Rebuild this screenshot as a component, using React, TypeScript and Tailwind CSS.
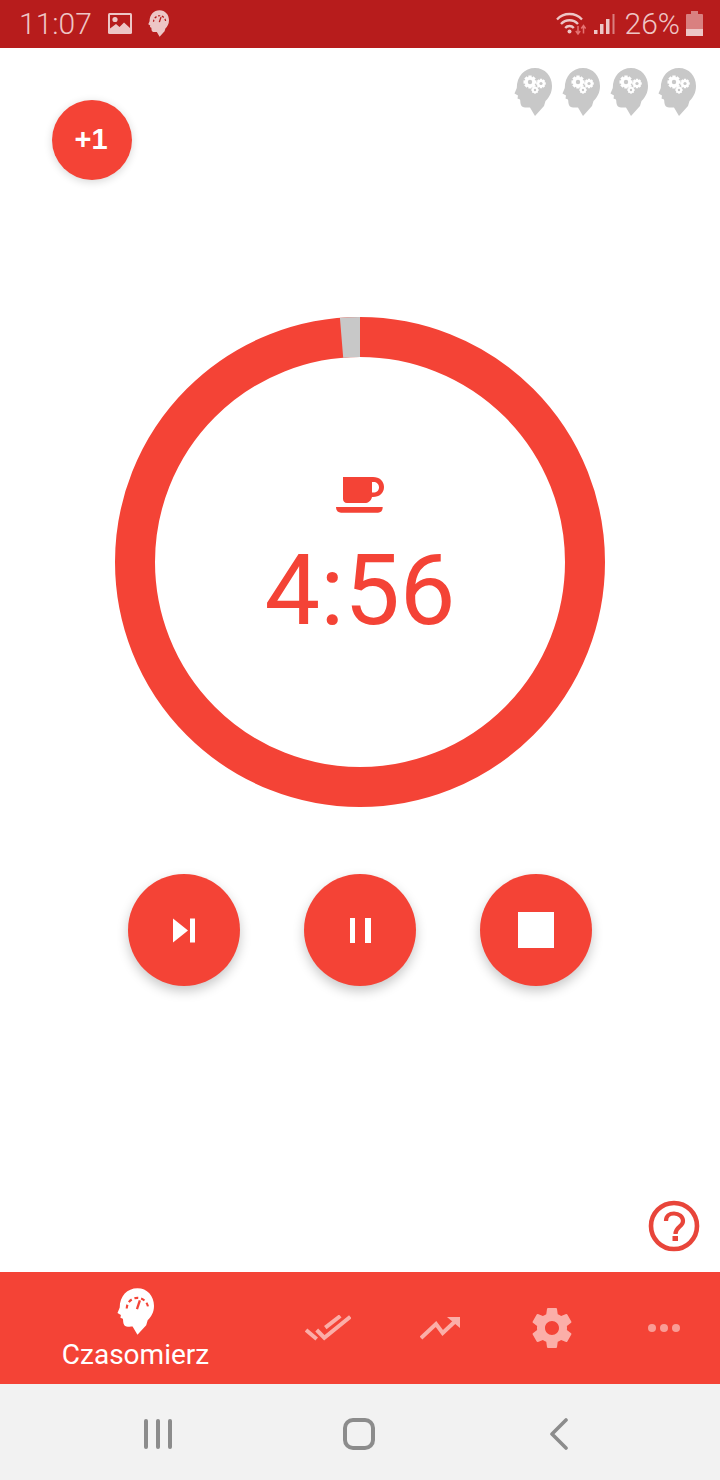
const RED = "#f44336";

const HEAD = "M21 0C31 0 38 8 38 18C38 25 35 29.5 31.5 33L30 38L21 48L16 39.5C13 39.5 9 40 7.5 38C6 36 6.5 33 6 31.5L3.5 30.5L4 27.5L0.5 25.5L2.8 20C2.8 8 10.5 0 21 0Z";

function Gear({ cx, cy, r }: { cx: number; cy: number; r: number }) {
  const teeth = [0, 45, 90, 135];
  return (
    <g>
      {teeth.map((a) => (
        <rect key={a} x={cx - r * 1.25} y={cy - r * 0.32} width={r * 2.5} height={r * 0.64} fill="#fff" transform={`rotate(${a} ${cx} ${cy})`} />
      ))}
      <circle cx={cx} cy={cy} r={r} fill="#fff" />
      <circle cx={cx} cy={cy} r={r * 0.42} fill="#c8c8c8" />
    </g>
  );
}

function GearHead() {
  return (
    <svg width="38" height="48" viewBox="0 0 38 48" className="block">
      <path d={HEAD} fill="#c8c8c8" />
      <Gear cx={16} cy={14} r={5.2} />
      <Gear cx={27} cy={15.5} r={3.8} />
      <Gear cx={21} cy={22} r={2.9} />
    </svg>
  );
}

function GaugeHead({ w, h, fg, bg }: { w: number; h: number; fg: string; bg: string }) {
  return (
    <svg width={w} height={h} viewBox="0 0 38 48" className="block">
      <path d={HEAD} fill={fg} />
      <path d="M10 21A11 11 0 0 1 32 21" fill="none" stroke={bg} strokeWidth="2.2" strokeDasharray="4 3" />
      <path d="M20.5 21.5L23.5 12.5" stroke={bg} strokeWidth="2.4" />
    </svg>
  );
}

function StatusBar() {
  const c = "#edc6c6";
  const dim = "#d98080";
  return (
    <div className="h-12 bg-[#b71c1c] flex items-center pl-[19px] pr-[17px] font-['Roboto',sans-serif] text-[#eec5c5]">
      <span className="text-[30px] leading-none font-light w-[74px]">11:07</span>
      <svg width="24" height="21" viewBox="0 0 24 21" className="ml-[15px] mt-[-1px]">
        <rect x="0" y="0" width="24" height="21" rx="1.5" fill={c} />
        <rect x="2" y="2" width="20" height="15" fill="#b71c1c" />
        <circle cx="7" cy="6.5" r="2.6" fill={c} />
        <path d="M2 15.5L8 11L11.5 14L16 9.5L22 15V18H2Z" fill={c} />
      </svg>
      <div className="ml-[16px] mt-[-1px]"><GaugeHead w={21} h={27} fg={c} bg="#b71c1c" /></div>
      <div className="flex-1" />
      <svg width="30" height="24" viewBox="0 0 30 24">
        <g fill="none" stroke={c} strokeWidth="2.3">
          <path d="M1 7.5A17 17 0 0 1 26 7.5" />
          <path d="M5 12A11.5 11.5 0 0 1 22 12" />
          <path d="M9.2 16A5.6 5.6 0 0 1 17.8 16" />
        </g>
        <circle cx="13.5" cy="19.5" r="2" fill={c} />
        <path d="M22 14V21.5M19.8 19L22 22L24.2 19" stroke="#e57373" strokeWidth="1.5" fill="none" />
        <path d="M27.5 21.5V14M25.3 16.5L27.5 13.5L29.7 16.5" stroke="#e57373" strokeWidth="1.5" fill="none" />
      </svg>
      <svg width="21" height="20" viewBox="0 0 21 20" className="ml-[8px]">
        <rect x="0" y="16" width="3.5" height="4" fill={c} />
        <rect x="6" y="10" width="3.5" height="10" fill={c} />
        <rect x="12" y="5" width="3.5" height="15" fill={c} />
        <rect x="18.5" y="0" width="2" height="20" fill={dim} />
      </svg>
      <span className="text-[30px] leading-none font-light ml-[10px]">26%</span>
      <div className="flex-1 max-w-[6px]" />
      <svg width="17" height="25" viewBox="0 0 17 25" className="mt-[-1px]">
        <rect x="5" y="0" width="7" height="3" fill={dim} />
        <rect x="0" y="3" width="17" height="22" rx="1" fill={dim} />
        <rect x="0" y="18" width="17" height="7" fill={c} />
      </svg>
    </div>
  );
}

function Ring() {
  const cx = 245;
  const r = 225;
  const a = (-4.7 * Math.PI) / 180;
  const x = cx + r * Math.sin(a);
  const y = cx - r * Math.cos(a);
  return (
    <svg width="490" height="490" viewBox="0 0 490 490" className="block">
      <circle cx={cx} cy={cx} r={r} fill="none" stroke={RED} strokeWidth="40" />
      <path d={`M${x} ${y}A${r} ${r} 0 0 1 ${cx} ${cx - r}`} fill="none" stroke="#c8c8c8" strokeWidth="40" />
    </svg>
  );
}

function RoundButton({ children }: { children: React.ReactNode }) {
  return (
    <button className="w-28 h-28 rounded-full bg-[#f44336] flex items-center justify-center shadow-[0_5px_12px_rgba(0,0,0,0.22)]">
      {children}
    </button>
  );
}

function Main() {
  return (
    <div className="h-[1224px] bg-white relative flex flex-col items-center font-['Roboto',sans-serif]">
      <div className="absolute right-[24px] top-[20px] flex gap-[10px]">
        <GearHead /><GearHead /><GearHead /><GearHead />
      </div>
      <button className="absolute left-[52px] top-[52px] w-20 h-20 rounded-full bg-[#f44336] text-white text-[29px] font-bold font-['Liberation_Sans',sans-serif] flex items-center justify-center shadow-[0_2px_8px_rgba(0,0,0,0.16)] pr-[2px]">
        +1
      </button>

      <div className="mt-[269px] relative w-[490px] h-[490px]">
        <Ring />
        <div className="absolute inset-0 flex flex-col items-center">
          <svg width="48" height="37" viewBox="0 0 48 37" className="mt-[159px]">
            <path d="M7 1H37C43.5 1 48 5 48 11C48 17 43.5 21 37 21H36C35 25 32 27 29 27H11C8.5 27 7 25 7 23ZM36 6V16.5H37.5C40.5 16.5 43 14.5 43 11.2C43 8 40.5 6 37.5 6Z" fill={RED} fillRule="evenodd" />
            <path d="M0 31H46.7C46.7 34.5 45 36.7 42 36.7H5C2 36.7 0 34.5 0 31Z" fill={RED} />
          </svg>
          <div className="text-[99px] leading-none text-[#f44336] mt-[28px]">4:56</div>
        </div>
      </div>

      <div className="mt-[67px] flex gap-16">
        <RoundButton>
          <svg width="22" height="25" viewBox="0 0 22 25">
            <path d="M0 0.5L15 12.5L0 24.5Z" fill="#fff" />
            <rect x="17" y="0.5" width="5" height="24" fill="#fff" />
          </svg>
        </RoundButton>
        <RoundButton>
          <div className="flex gap-[10px] h-[25px]">
            <div className="w-[5.5px] bg-white" />
            <div className="w-[5.5px] bg-white" />
          </div>
        </RoundButton>
        <RoundButton>
          <div className="w-[36px] h-[36px] bg-white" />
        </RoundButton>
      </div>

      <svg width="52" height="52" viewBox="0 0 52 52" className="absolute right-[20px] top-[1152px]">
        <circle cx="26" cy="26" r="23" fill="none" stroke="#e8453a" strokeWidth="4.6" />
        <path d="M18 21C18 16 21.5 13.5 26 13.5C31 13.5 35 16.5 35 21C35 27 27.5 26.5 27.5 34" fill="none" stroke="#e8453a" strokeWidth="4.2" />
        <rect x="24.5" y="36" width="5.5" height="5" fill="#e8453a" />
      </svg>
    </div>
  );
}

function BottomNav() {
  const d = "#fbaea8";
  return (
    <div className="h-28 bg-[#f44336] flex font-['Roboto',sans-serif]">
      <div className="w-[271px] flex flex-col items-center pt-[16px]">
        <GaugeHead w={37} h={47} fg="#fff" bg={RED} />
        <span className="text-white text-[28px] leading-none mt-[6px]">Czasomierz</span>
      </div>
      <div className="w-28 flex items-center justify-center">
        <svg width="46" height="26" viewBox="0 0 46 26" className="ml-[2px]">
          <path d="M1 15L11.7 24" stroke={d} strokeWidth="4" fill="none" />
          <path d="M11.7 15L19.3 22.7L45.3 1.7" stroke={d} strokeWidth="4" fill="none" />
          <path d="M20.3 12.7L35.3 1" stroke={d} strokeWidth="4" fill="none" />
        </svg>
      </div>
      <div className="w-28 flex items-center justify-center">
        <svg width="42" height="26" viewBox="0 0 42 26" className="ml-[4px]">
          <path d="M1 23L16 9L22.7 18L36 5.5" stroke={d} strokeWidth="4" fill="none" />
          <path d="M27 2H40V13Z" fill={d} />
        </svg>
      </div>
      <div className="w-28 flex items-center justify-center">
        <svg width="48" height="48" viewBox="0 0 24 24" className="ml-[2px]">
          <path fill={d} d="M19.43 12.98c.04-.32.07-.64.07-.98s-.03-.66-.07-.98l2.11-1.65c.19-.15.24-.42.12-.64l-2-3.46c-.12-.22-.39-.3-.61-.22l-2.49 1c-.52-.4-1.08-.73-1.69-.98l-.38-2.65C14.46 2.18 14.25 2 14 2h-4c-.25 0-.46.18-.49.42l-.38 2.65c-.61.25-1.17.59-1.69.98l-2.49-1c-.23-.09-.49 0-.61.22l-2 3.46c-.13.22-.07.49.12.64l2.11 1.65c-.04.32-.07.65-.07.98s.03.66.07.98l-2.11 1.65c-.19.15-.24.42-.12.64l2 3.46c.12.22.39.3.61.22l2.49-1c.52.4 1.08.73 1.69.98l.38 2.65c.03.24.24.42.49.42h4c.25 0 .46-.18.49-.42l.38-2.65c.61-.25 1.17-.59 1.69-.98l2.49 1c.23.09.49 0 .61-.22l2-3.46c.12-.22.07-.49-.12-.64l-2.11-1.65zM12 15.5c-1.93 0-3.5-1.57-3.5-3.5s1.57-3.5 3.5-3.5 3.5 1.57 3.5 3.5-1.57 3.5-3.5 3.5z" />
        </svg>
      </div>
      <div className="flex-1 flex items-center justify-center gap-[4px]">
        <div className="w-[8px] h-[8px] rounded-full bg-[#f99c95]" />
        <div className="w-[8px] h-[8px] rounded-full bg-[#f99c95]" />
        <div className="w-[8px] h-[8px] rounded-full bg-[#f99c95]" />
      </div>
    </div>
  );
}

function SystemNav() {
  return (
    <div className="h-24 bg-[#f2f2f2] flex items-center pl-[144px] pt-[4px]">
      <div className="flex gap-[8px] h-[30px]">
        <div className="w-1 bg-[#8c8c8c] rounded-full" />
        <div className="w-1 bg-[#8c8c8c] rounded-full" />
        <div className="w-1 bg-[#8c8c8c] rounded-full" />
      </div>
      <div className="w-8 h-[32px] border-[4px] border-[#8c8c8c] rounded-[10px] ml-[171px]" />
      <svg width="20" height="32" viewBox="0 0 20 32" className="ml-[174px]">
        <path d="M17 2L3 16L17 30" fill="none" stroke="#8c8c8c" strokeWidth="3.6" strokeLinecap="round" strokeLinejoin="round" />
      </svg>
    </div>
  );
}

export default function App() {
  return (
    <div className="w-[720px] h-[1480px] flex flex-col overflow-hidden">
      <StatusBar />
      <Main />
      <BottomNav />
      <SystemNav />
    </div>
  );
}
